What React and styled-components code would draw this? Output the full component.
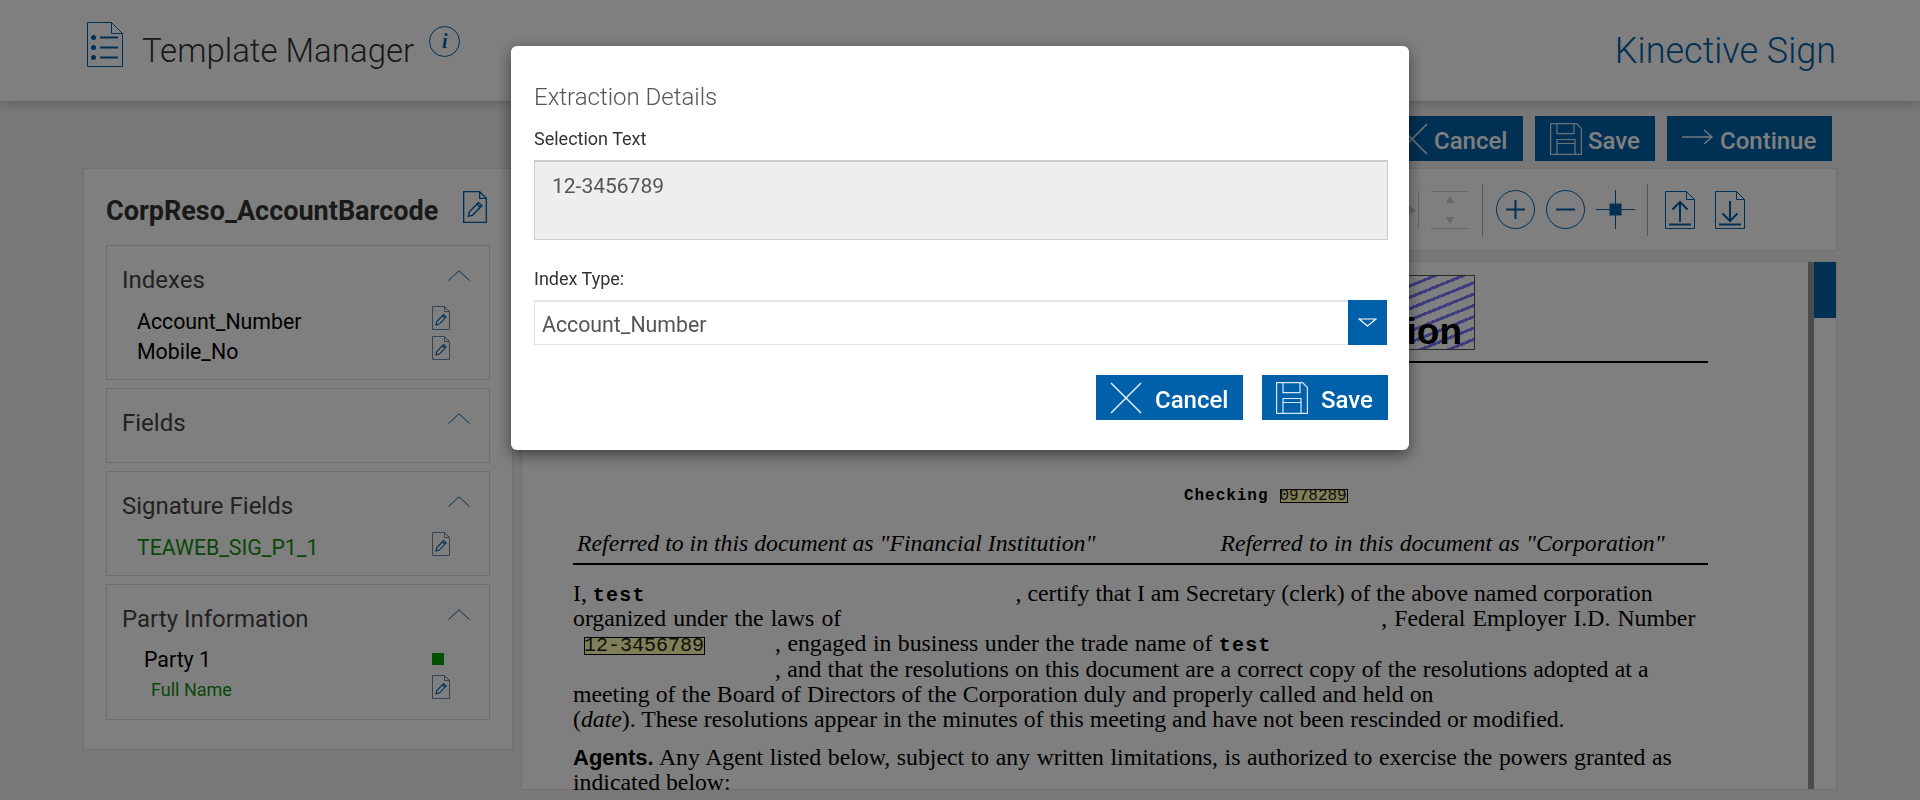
import styled, { createGlobalStyle } from "styled-components";

const BLUE = "#0060a9";

const GlobalStyle = createGlobalStyle`
  html, body {
    margin: 0;
    height: 100%;
    overflow: hidden;
    background: #f0f0f0;
    font-family: Roboto, "Liberation Sans", sans-serif;
  }
  * { box-sizing: border-box; }
`;

const Page = styled.div`
  width: 1920px;
  height: 800px;
  overflow: hidden;
`;

const Header = styled.header`
  height: 101px;
  background: #fff;
  box-shadow: 0 2px 10px rgba(0, 0, 0, 0.2);
  display: flex;
  align-items: flex-start;
  padding: 22px 84px 0 87px;
`;

const HeaderTitle = styled.h1`
  margin: 9px 0 0 19px;
  font-size: 33px;
  font-weight: 300;
  line-height: 40px;
  color: #333;
`;

const InfoBadge = styled.span`
  width: 31px;
  height: 31px;
  margin: 4px 0 0 15px;
  border: 1px solid ${BLUE};
  border-radius: 50%;
  display: flex;
  align-items: center;
  justify-content: center;
  color: ${BLUE};
  font: italic 700 20px "Liberation Serif", serif;
`;

const Brand = styled.div`
  margin: 9px 0 0 auto;
  font-size: 36px;
  font-weight: 300;
  line-height: 40px;
  color: ${BLUE};
`;

const Body = styled.main`
  display: flex;
  align-items: flex-start;
  gap: 8px;
  padding: 15px 83px 0;
`;

const Sidebar = styled.aside`
  width: 430px;
  height: 582px;
  margin-top: 52px;
  padding: 22px 22px 0;
  background: #fff;
  border: 1px solid #e4e4e4;
`;

const TemplateRow = styled.div`
  display: flex;
  justify-content: space-between;
  height: 54px;
  padding-right: 2px;
`;

const TemplateName = styled.h2`
  margin: 4px 0 0;
  font-size: 27px;
  font-weight: 700;
  line-height: 32px;
  color: #333;
`;

const Section = styled.section`
  height: ${(p) => p.$h}px;
  margin-bottom: 8px;
  padding: 0 19px 0 15px;
  border: 1px solid #ddd;
`;

const SectionHead = styled.div`
  display: flex;
  justify-content: space-between;
  align-items: flex-start;
  height: 57px;
  padding-top: 21px;
`;

const SectionTitle = styled.h3`
  margin: 0;
  font-size: 24px;
  font-weight: 400;
  line-height: 26px;
  color: #444;
`;

const Item = styled.div`
  display: flex;
  align-items: center;
  justify-content: space-between;
  height: 30px;
  padding: 0 20px 0 ${(p) => p.$indent || 15}px;
  color: ${(p) => p.$color || "#000"};
  font-size: ${(p) => p.$size || 21.3}px;
`;

const ItemLabel = styled.span`
  padding-top: ${(p) => p.$pt || 6}px;
`;

const PartySquare = styled.span`
  width: 12px;
  height: 12px;
  margin: 4px 6px 0 0;
  background: #00a000;
`;

const RightColumn = styled.div`
  flex: 1;
  min-width: 0;
`;

const ActionBar = styled.div`
  display: flex;
  justify-content: flex-end;
  gap: 12px;
  height: 52px;
  padding-right: 5px;
`;

const ActionButton = styled.button`
  height: 45px;
  width: ${(p) => p.$w}px;
  padding: 0 0 0 ${(p) => p.$pad || 14}px;
  display: flex;
  align-items: center;
  gap: ${(p) => p.$gap || 13}px;
  border: 0;
  background: ${BLUE};
  color: #fff;
  font-family: Roboto, sans-serif;
  font-size: 24px;
  font-weight: 500;
  & > span { padding-top: 5px; }
`;

const Toolbar = styled.div`
  height: 83px;
  display: flex;
  align-items: center;
  justify-content: flex-end;
  padding-right: 91px;
  background: #fff;
  border: 1px solid #e4e4e4;
`;

const ToolbarSep = styled.span`
  width: 1px;
  height: 52px;
  margin: ${(p) => p.$m || "0 13px"};
  background: #aaa;
`;

const ToolButton = styled.span`
  display: flex;
  margin-left: ${(p) => p.$ml || 0}px;
`;

const DocPanel = styled.div`
  position: relative;
  height: 529px;
  margin-top: 10px;
  padding: 13px 0 0 51px;
  background: #fff;
  border: 1px solid #e4e4e4;
  font-family: "Liberation Serif", serif;
  font-size: 23.75px;
  color: #000;
`;

const ScrollTrack = styled.div`
  position: absolute;
  top: 0;
  right: 0;
  bottom: 0;
  width: 28px;
  border-left: 6px solid #989898;
`;

const ScrollThumb = styled.div`
  height: 56px;
  background: ${BLUE};
`;

const DocHeading = styled.div`
  width: 902px;
  height: 75px;
  display: flex;
  justify-content: flex-end;
  align-items: flex-end;
  font: 700 37px/34px "Liberation Sans", sans-serif;
  border: 1px solid #555;
  border-left: 0;
  padding-right: 12px;
  background: repeating-linear-gradient(
    -22deg,
    #fff 0 7.5px,
    #7a7aff 7.5px 10.5px
  );
`;

const Rule = styled.div`
  width: 1135px;
  height: 2px;
  margin-top: ${(p) => p.$mt}px;
  background: #000;
`;

const CheckingLine = styled.div`
  display: flex;
  align-items: center;
  height: 18px;
  margin: 124px 0 0 611px;
  font: 700 16px "Liberation Mono", monospace;
  letter-spacing: 0.96px;
`;

const Highlight = styled.span`
  display: inline-block;
  width: ${(p) => p.$w}px;
  height: ${(p) => p.$h}px;
  margin-left: ${(p) => p.$ml || 0}px;
  background: #ffffb0;
  box-shadow: inset 0 0 0 1px #000;
  color: #222;
  font: 400 ${(p) => p.$size}px/${(p) => p.$h}px "Liberation Mono", monospace;
  letter-spacing: 0;
  white-space: nowrap;
`;

const RefRow = styled.div`
  display: flex;
  width: 1135px;
  height: 26px;
  margin-top: 25px;
  padding-left: 4px;
  font-style: italic;
  line-height: 26px;
  gap: 125px;
`;

const RefText = styled.span`
  word-spacing: ${(p) => p.$ws || 0}px;
`;

const Para = styled.div`
  margin-top: ${(p) => p.$mt || 0}px;
  height: 25.2px;
  line-height: 25.2px;
  white-space: nowrap;
  word-spacing: ${(p) => p.$ws || 0}px;
`;

const Filled = styled.b`
  font: 700 20px/1 "Liberation Mono", monospace;
  letter-spacing: 1.2px;
`;

const AgentsLabel = styled.b`
  font: 700 22px/1 "Liberation Sans", sans-serif;
`;

const Gap = styled.span`
  display: inline-block;
  width: ${(p) => p.$w}px;
`;

const Overlay = styled.div`
  position: fixed;
  inset: 0;
  display: flex;
  justify-content: center;
  align-items: flex-start;
  padding-top: 46px;
  background: rgba(0, 0, 0, 0.5);
`;

const Modal = styled.div`
  width: 898px;
  height: 404px;
  padding: 0 21px 0 23px;
  background: #fff;
  border-radius: 6px;
  box-shadow: 0 5px 15px rgba(0, 0, 0, 0.5);
`;

const ModalTitle = styled.h4`
  margin: 0;
  padding-top: 36px;
  font-size: 24px;
  font-weight: 300;
  line-height: 30px;
  color: #555;
`;

const FieldLabel = styled.label`
  display: block;
  margin-top: ${(p) => p.$mt}px;
  font-size: 18px;
  line-height: 20px;
  color: #333;
`;

const SelectionBox = styled.div`
  height: 80px;
  margin-top: 11px;
  padding: 12px 17px;
  background: #eee;
  border: 1px solid #ccc;
  border-top-width: 2px;
  font-size: 21px;
  line-height: 24px;
  color: #555;
`;

const SelectRow = styled.div`
  display: flex;
  height: 45px;
  margin-top: 11px;
  margin-right: 1px;
`;

const SelectValue = styled.div`
  flex: 1;
  padding: 4px 7px 0;
  border: 1px solid #e2e2e2;
  border-top-width: 2px;
  border-right: 0;
  font-size: 21.3px;
  line-height: 38px;
  color: #555;
`;

const SelectCaret = styled.div`
  width: 39px;
  display: flex;
  align-items: center;
  justify-content: center;
  background: ${BLUE};
`;

const ModalActions = styled.div`
  display: flex;
  justify-content: flex-end;
  gap: 19px;
  margin-top: 30px;
`;

const Stroke = styled.svg`
  display: block;
  flex: none;
  fill: none;
  margin-top: ${(p) => p.$mt || 0}px;
  stroke: ${(p) => p.$c || BLUE};
  stroke-width: ${(p) => p.$sw || 1};
`;

const ListDocIcon = () => (
  <Stroke width="36" height="45" viewBox="0 0 36 45">
    <path d="M.5.5h24l11 11v33H.5zM24.500.5v11h11" />
    <g strokeWidth="2">
      <path d="M13 15.500h18M13 25.500h18M13 35.500h18" />
    </g>
    <g fill={BLUE} stroke="none">
      <circle cx="6.500" cy="15.500" r="2.500" />
      <circle cx="6.500" cy="25.500" r="2.500" />
      <circle cx="6.500" cy="35.500" r="2.500" />
    </g>
  </Stroke>
);

const EditDocIcon = ({ large }) => (
  <Stroke
    width={large ? 26 : 18}
    height={large ? 32 : 24}
    viewBox="0 0 18 24"
    $c={large ? BLUE : "#6b8aa8"}
  >
    <path d="M.5.500h12l5 5v18H.5zM12.500.500v5h5" />
    <path
      d="M4 19l.8-3.400 6.800-7 2.500 2.500-6.800 7zM10.500 9.800l2.500 2.500"
      stroke={BLUE}
      strokeWidth="1.100"
    />
  </Stroke>
);

const Chevron = () => (
  <Stroke width="22" height="11" viewBox="0 0 22 11" $mt={3}>
    <path d="M.5 10.500 11 .8l10.500 9.700" />
  </Stroke>
);

const CloseIcon = () => (
  <Stroke width="32" height="32" viewBox="0 0 32 32" $c="#e8f0f8" $sw="1.500">
    <path d="M1 1l30 30M31 1 1 31" />
  </Stroke>
);

const SaveIcon = () => (
  <Stroke width="32" height="32" viewBox="0 0 32 32" $c="#d8e6f2" $sw="1.200">
    <path d="M.6.600h26l4.800 5v25.800H.6zM7 .600v10h17V.600M7 31.400V16.500h18v14.900M7 20.500h18" />
  </Stroke>
);

const ArrowIcon = () => (
  <Stroke width="31" height="20" viewBox="0 0 31 20" $c="#e8f0f8" $sw="1.500">
    <path d="M0 8h30M22 1l8 7-8 7" />
  </Stroke>
);

// the two grey fit-page icons are disabled in the reference
const FitWidthIcon = () => (
  <Stroke width="38" height="38" viewBox="0 0 38 38" $c="#d0d0d0">
    <path d="M37.500 0v38M.5 0v38" />
    <path d="M35 19l-8-5v10zM3 19l8-5v10z" fill="#d0d0d0" stroke="none" />
  </Stroke>
);

const FitHeightIcon = () => (
  <Stroke width="38" height="38" viewBox="0 0 38 38" $c="#d0d0d0">
    <path d="M0 .500h38M0 37.500h38" />
    <path d="M19 5l4.500 7h-9zM19 33l4.500-7h-9z" fill="#d0d0d0" stroke="none" />
  </Stroke>
);

const CircleIcon = ({ plus }) => (
  <Stroke width="39" height="39" viewBox="0 0 39 39">
    <circle cx="19.500" cy="19.500" r="19" />
    <path d={plus ? "M10 19.500h19M19.500 10v19" : "M10 19.500h19"} strokeWidth="2" />
  </Stroke>
);

const FitCrossIcon = () => (
  <Stroke width="39" height="39" viewBox="0 0 39 39">
    <path d="M0 19.500h39M19.500 0v39" />
    <rect x="13.500" y="13.500" width="12" height="12" fill={BLUE} stroke="none" />
  </Stroke>
);

const TransferDocIcon = ({ down }) => (
  <Stroke width="30" height="38" viewBox="0 0 30 38">
    <path d="M.5.500h21l8 8v29H.5zM21.500.500v8h8" />
    <path d="M4 33.500h22" strokeWidth="2" />
    <path
      d={down ? "M15 10v20M7.500 22.500 15 30l7.500-7.500" : "M15 31V11M7.500 18.500 15 11l7.500 7.500"}
      strokeWidth="2"
    />
  </Stroke>
);

const CaretIcon = () => (
  <Stroke width="19" height="9" viewBox="0 0 19 9" $c="#fff" $sw="1.200">
    <path d="M1 1h17L9.500 8z" />
  </Stroke>
);

const Sections = () => (
  <>
    <Section $h={135}>
      <SectionHead>
        <SectionTitle>Indexes</SectionTitle>
        <Chevron />
      </SectionHead>
      <Item>
        <ItemLabel>Account_Number</ItemLabel>
        <EditDocIcon />
      </Item>
      <Item>
        <ItemLabel>Mobile_No</ItemLabel>
        <EditDocIcon />
      </Item>
    </Section>
    <Section $h={75}>
      <SectionHead>
        <SectionTitle>Fields</SectionTitle>
        <Chevron />
      </SectionHead>
    </Section>
    <Section $h={105}>
      <SectionHead>
        <SectionTitle>Signature Fields</SectionTitle>
        <Chevron />
      </SectionHead>
      <Item $color="#109010">
        <ItemLabel>TEAWEB_SIG_P1_1</ItemLabel>
        <EditDocIcon />
      </Item>
    </Section>
    <Section $h={136}>
      <SectionHead>
        <SectionTitle>Party Information</SectionTitle>
        <Chevron />
      </SectionHead>
      <Item $indent={22}>
        <ItemLabel $pt={5}>Party 1</ItemLabel>
        <PartySquare />
      </Item>
      <Item $indent={29} $color="#109010" $size={18}>
        <ItemLabel $pt={5}>Full Name</ItemLabel>
        <EditDocIcon />
      </Item>
    </Section>
  </>
);

const Document = () => (
  <DocPanel>
    <DocHeading>ion</DocHeading>
    <Rule $mt={11} />
    <CheckingLine>
      Checking
      <Highlight $w={68} $h={14} $size={16} $ml={11}>0978289</Highlight>
    </CheckingLine>
    <RefRow>
      <RefText>Referred to in this document as "Financial Institution"</RefText>
      <RefText $ws={0.5}>Referred to in this document as "Corporation"</RefText>
    </RefRow>
    <Rule $mt={7} />
    <Para $mt={16}>
      I, <Filled>test</Filled>
      <Gap $w={370} />, certify that I am Secretary (clerk) of the above named corporation
    </Para>
    <Para $ws={1.2}>
      organized under the laws of
      <Gap $w={540} />, Federal Employer I.D. Number
    </Para>
    <Para $ws={0.5}>
      <Gap $w={11} />
      <Highlight $w={121} $h={18} $size={20}>12-3456789</Highlight>
      <Gap $w={70} />, engaged in business under the trade name of <Filled>test</Filled>
    </Para>
    <Para $ws={0.25}>
      <Gap $w={202} />, and that the resolutions on this document are a correct copy of the resolutions adopted at a
    </Para>
    <Para $ws={0.25}>meeting of the Board of Directors of the Corporation duly and properly called and held on</Para>
    <Para>
      (<i>date</i>). These resolutions appear in the minutes of this meeting and have not been rescinded or modified.
    </Para>
    <Para $mt={13} $ws={0.65}>
      <AgentsLabel>Agents.</AgentsLabel> Any Agent listed below, subject to any written limitations, is authorized to exercise the powers granted as
    </Para>
    <Para>indicated below:</Para>
    <ScrollTrack>
      <ScrollThumb />
    </ScrollTrack>
  </DocPanel>
);

export default function App() {
  return (
    <Page>
      <GlobalStyle />
      <Header>
        <ListDocIcon />
        <HeaderTitle>Template Manager</HeaderTitle>
        <InfoBadge>i</InfoBadge>
        <Brand>Kinective Sign</Brand>
      </Header>
      <Body>
        <Sidebar>
          <TemplateRow>
            <TemplateName>CorpReso_AccountBarcode</TemplateName>
            <EditDocIcon large />
          </TemplateRow>
          <Sections />
        </Sidebar>
        <RightColumn>
          <ActionBar>
            <ActionButton $w={141} $gap={6}>
              <CloseIcon />
              <span>Cancel</span>
            </ActionButton>
            <ActionButton $w={120} $pad={15} $gap={6}>
              <SaveIcon />
              <span>Save</span>
            </ActionButton>
            <ActionButton $w={165} $pad={15} $gap={7}>
              <ArrowIcon />
              <span>Continue</span>
            </ActionButton>
          </ActionBar>
          <Toolbar>
            <FitWidthIcon />
            <ToolButton $ml={12}>
              <FitHeightIcon />
            </ToolButton>
            <ToolbarSep />
            <CircleIcon plus />
            <ToolButton $ml={11}>
              <CircleIcon />
            </ToolButton>
            <ToolButton $ml={11}>
              <FitCrossIcon />
            </ToolButton>
            <ToolbarSep $m="0 17px 0 12px" />
            <TransferDocIcon />
            <ToolButton $ml={20}>
              <TransferDocIcon down />
            </ToolButton>
          </Toolbar>
          <Document />
        </RightColumn>
      </Body>
      <Overlay>
        <Modal>
          <ModalTitle>Extraction Details</ModalTitle>
          <FieldLabel $mt={17}>Selection Text</FieldLabel>
          <SelectionBox>12-3456789</SelectionBox>
          <FieldLabel $mt={29}>Index Type:</FieldLabel>
          <SelectRow>
            <SelectValue>Account_Number</SelectValue>
            <SelectCaret>
              <CaretIcon />
            </SelectCaret>
          </SelectRow>
          <ModalActions>
            <ActionButton $w={147}>
              <CloseIcon />
              <span>Cancel</span>
            </ActionButton>
            <ActionButton $w={126}>
              <SaveIcon />
              <span>Save</span>
            </ActionButton>
          </ModalActions>
        </Modal>
      </Overlay>
    </Page>
  );
}
